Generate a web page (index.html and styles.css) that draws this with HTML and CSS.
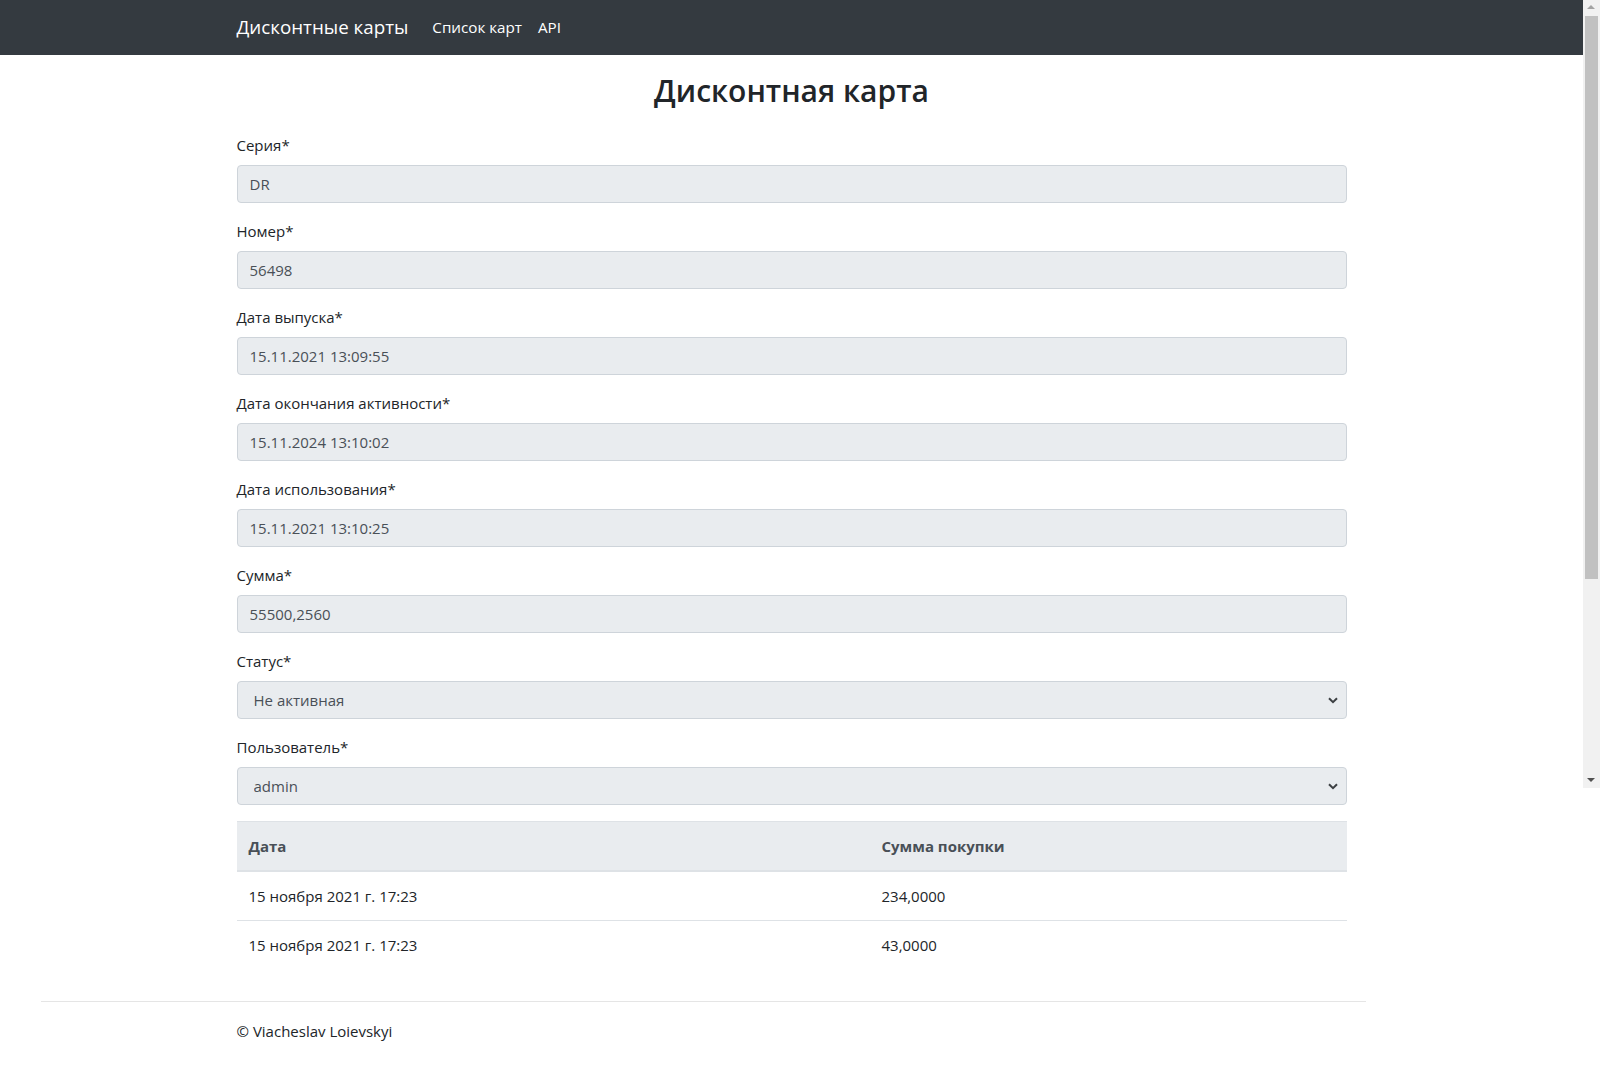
FILE: index.html
```html
<!DOCTYPE html>
<html lang="ru">
<head>
<meta charset="utf-8">
<title>Дисконтная карта</title>
<link rel="stylesheet" href="styles.css">
</head>
<body>
<div class="page">
  <header class="navbar">
    <div class="container nav-inner">
      <a class="brand">Дисконтные карты</a>
      <nav class="nav-links">
        <a class="nav-link">Список карт</a>
        <a class="nav-link">API</a>
      </nav>
    </div>
  </header>

  <main class="container main">
    <h2 class="title">Дисконтная карта</h2>
    <form class="form">
      <div class="form-group">
        <label class="label">Серия*</label>
        <input class="control" type="text" value="DR" readonly>
      </div>
      <div class="form-group">
        <label class="label">Номер*</label>
        <input class="control" type="text" value="56498" readonly>
      </div>
      <div class="form-group">
        <label class="label">Дата выпуска*</label>
        <input class="control" type="text" value="15.11.2021 13:09:55" readonly>
      </div>
      <div class="form-group">
        <label class="label">Дата окончания активности*</label>
        <input class="control" type="text" value="15.11.2024 13:10:02" readonly>
      </div>
      <div class="form-group">
        <label class="label">Дата использования*</label>
        <input class="control" type="text" value="15.11.2021 13:10:25" readonly>
      </div>
      <div class="form-group">
        <label class="label">Сумма*</label>
        <input class="control" type="text" value="55500,2560" readonly>
      </div>
      <div class="form-group">
        <label class="label">Статус*</label>
        <div class="select-wrap">
          <select class="control select"><option>Не активная</option></select>
          <svg class="chevron" width="10" height="7" viewBox="0 0 10 7"><path d="M1 1.2 L5 5.2 L9 1.2" fill="none" stroke="#3c4043" stroke-width="2"/></svg>
        </div>
      </div>
      <div class="form-group">
        <label class="label">Пользователь*</label>
        <div class="select-wrap">
          <select class="control select"><option>admin</option></select>
          <svg class="chevron" width="10" height="7" viewBox="0 0 10 7"><path d="M1 1.2 L5 5.2 L9 1.2" fill="none" stroke="#3c4043" stroke-width="2"/></svg>
        </div>
      </div>
    </form>

    <table class="table">
      <thead>
        <tr><th class="col-date">Дата</th><th>Сумма покупки</th></tr>
      </thead>
      <tbody>
        <tr><td>15 ноября 2021 г. 17:23</td><td>234,0000</td></tr>
        <tr><td>15 ноября 2021 г. 17:23</td><td>43,0000</td></tr>
      </tbody>
    </table>
  </main>

  <footer class="footer">
    <div class="container">© Viacheslav Loievskyi</div>
  </footer>

  <div class="scrollbar">
    <span class="sb-arrow sb-up"></span>
    <span class="sb-thumb"></span>
    <span class="sb-arrow sb-down"></span>
  </div>
</div>
</body>
</html>
```

FILE: styles.css
```css
* { box-sizing: border-box; }

html, body {
  margin: 0;
  padding: 0;
  background: #fff;
}

body {
  font-family: "Open Sans", "Noto Sans", "Liberation Sans", sans-serif;
  font-size: 15px;
  line-height: 24px;
  color: #212529;
}

.page {
  position: relative;
  width: 1583px;
  min-height: 1091px;
}

.container {
  width: 1110px;
  margin: 0 auto;
}

/* Navbar */
.navbar {
  height: 55px;
  background: #343a40;
  margin-bottom: 16px;
}

.nav-inner {
  display: flex;
  align-items: center;
  height: 55px;
}

.brand {
  font-size: 18.75px;
  line-height: 30px;
  color: #fff;
  margin-right: 16px;
  padding-bottom: 1px;
}

.nav-links {
  display: flex;
}

.nav-link {
  color: #fff;
  font-size: 15.2px;
  line-height: 24px;
  padding: 0 8px;
  padding-bottom: 1px;
}

/* Main */
.main {
  padding-bottom: 16px;
}

.title {
  margin: 0 0 22px;
  font-size: 30px;
  line-height: 40px;
  font-weight: 600;
  text-align: center;
  color: #212529;
}

.form {
  margin: 0;
}

.form-group {
  display: flex;
  flex-direction: column;
  margin-bottom: 16px;
}

.label {
  display: block;
  margin-bottom: 8px;
  line-height: 24px;
}

.control {
  display: block;
  width: 100%;
  height: 38px;
  padding: 6px 12px;
  font-family: inherit;
  font-size: 15px;
  line-height: 24px;
  color: #495057;
  background: #e9ecef;
  border: 1px solid #ced4da;
  border-radius: 4px;
  outline: none;
  margin: 0;
}

.select-wrap {
  position: relative;
}

.select {
  -webkit-appearance: none;
  appearance: none;
  padding-left: 16px;
}

.chevron {
  position: absolute;
  right: 9px;
  top: 16px;
  pointer-events: none;
}

/* Table */
.table {
  width: 100%;
  border-collapse: collapse;
  margin-bottom: 16px;
  color: #212529;
}

.table th,
.table td {
  padding: 12px;
  text-align: left;
  vertical-align: top;
  border-top: 1px solid #dee2e6;
  line-height: 24px;
}

.table thead th {
  background: #e9ecef;
  color: #495057;
  font-weight: 700;
  border-bottom: 2px solid #dee2e6;
}

.col-date {
  width: 633px;
}

/* Footer */
.footer {
  margin-left: 41px;
  width: 1325px;
  border-top: 1px solid #e5e5e5;
  line-height: 58px;
  color: #212529;
}

.footer .container {
  margin-left: 195.5px;
}

/* Fake scrollbar */
.scrollbar {
  position: absolute;
  top: 0;
  left: 1583px;
  width: 17px;
  height: 788px;
  background: #f1f1f1;
}

.sb-thumb {
  position: absolute;
  left: 2px;
  top: 16px;
  width: 13px;
  height: 563px;
  background: #c1c1c1;
}

.sb-arrow {
  position: absolute;
  left: 4px;
  width: 0;
  height: 0;
  border-left: 4.5px solid transparent;
  border-right: 4.5px solid transparent;
}

.sb-up {
  top: 5px;
  border-bottom: 4.5px solid #a3a3a3;
}

.sb-down {
  bottom: 6px;
  border-top: 4.5px solid #505050;
}
```
